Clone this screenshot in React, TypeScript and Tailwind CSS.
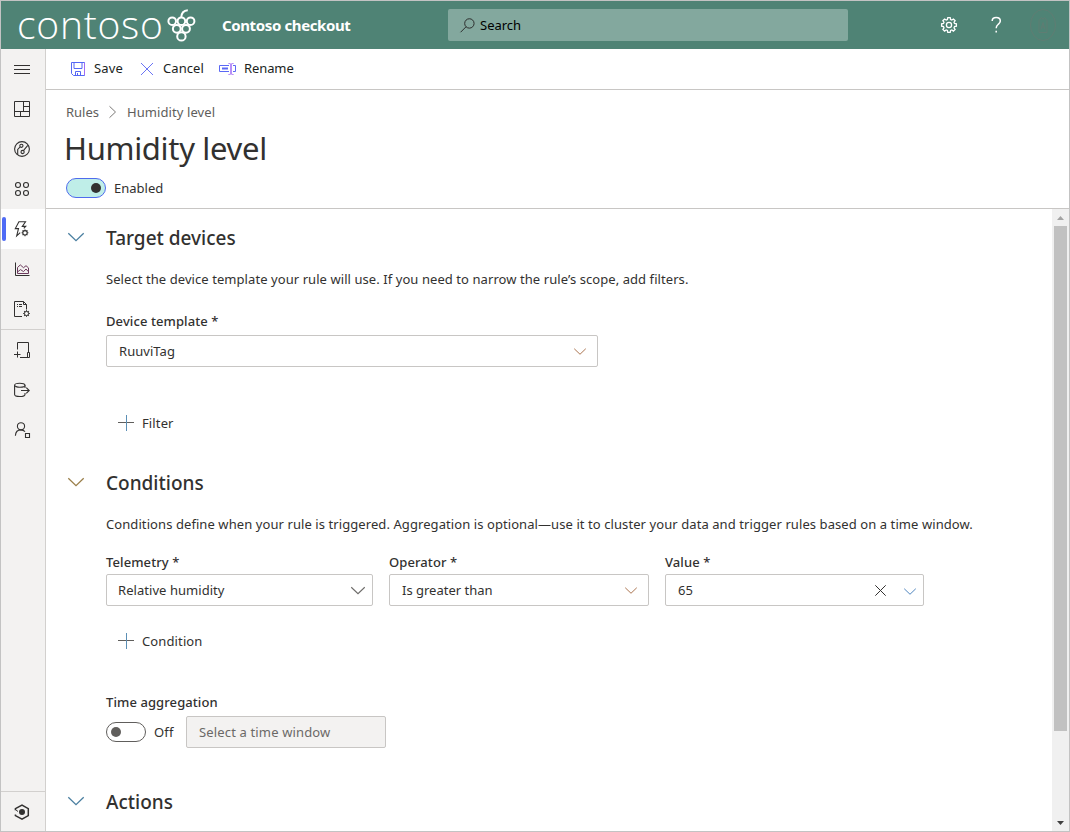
import React from "react";
import type { ReactNode } from "react";

const Glyph = ({ children, className = "size-4 text-[#323130]", box = "0 0 16 16", width = 1 }: { children: ReactNode; className?: string; box?: string; width?: number }) => (
  <svg viewBox={box} className={`shrink-0 overflow-visible ${className}`} fill="none" stroke="currentColor" strokeWidth={width}>
    {children}
  </svg>
);

const Cog = ({ x, y, r }: { x: number; y: number; r: number }) => (
  <g>
    <circle cx={x} cy={y} r={r} />
    {[0, 45, 90, 135, 180, 225, 270, 315].map((a) => (
      <path key={a} d={`M${x} ${y - r}v-1.2`} transform={`rotate(${a} ${x} ${y})`} />
    ))}
  </g>
);

function NavItem({ active = false, children }: { active?: boolean; children: ReactNode }) {
  return (
    <a className={`flex h-10 w-full shrink-0 items-center ${active ? "bg-white" : ""}`}>
      <span className={`ml-px h-6 w-1 rounded-full ${active ? "bg-[#4f6bf5]" : ""}`} />
      <span className="ml-2 flex size-4">{children}</span>
    </a>
  );
}

function Sidebar() {
  return (
    <nav className="flex w-[45px] shrink-0 flex-col border-r border-[#d2d0ce] bg-[#f3f2f1]">
      <NavItem>
        <Glyph><path d="M0 4.5h16M0 8.5h16M0 12.5h16" /></Glyph>
      </NavItem>
      <NavItem>
        <Glyph><path d="M.5 .5h15v15H.5zM9.5 .5v10M.5 10.5h15M9.5 5.5h6M6.5 10.5v5" /></Glyph>
      </NavItem>
      <NavItem>
        <Glyph width={1.1}>
          <circle cx="8" cy="8" r="7.4" />
          <circle cx="7.4" cy="4.8" r="1.6" />
          <circle cx="8.6" cy="11" r="1.6" />
          <path d="M6.2 5.9 3.7 8.4v5.4M9.4 9.6l4.4-5.2" />
        </Glyph>
      </NavItem>
      <NavItem>
        <Glyph width={1.1}>
          <circle cx="4" cy="4" r="2.5" />
          <circle cx="12" cy="4" r="2.5" />
          <circle cx="4" cy="12" r="2.5" />
          <circle cx="12" cy="12" r="2.5" />
        </Glyph>
      </NavItem>
      <NavItem active>
        <Glyph width={1.1}>
          <path d="M6 .8H4.9L1.3 7.6h3.2L2.7 14.8 6.2 11.6M5.5 .8h6L8.3 5.4h3.4L9.8 7.4" />
          <Cog x={11} y={11.8} r={2.2} />
        </Glyph>
      </NavItem>
      <NavItem>
        <Glyph>
          <path d="M1.5 1.5v13H15.5" />
          <path d="M3.5 12.5v-6l2.8-2.6 3.2 2.8 2.5-2 2.5 2.2v5.6zM3.5 11l3-2.4 3 2 2.5-2.6 2.5 2.8" stroke="#6b3a5c" />
        </Glyph>
      </NavItem>
      <NavItem>
        <Glyph>
          <path d="M8 15.5H.5V.5h9l3 3v5M9.5 .5v3h3M3 3.5h1M5 3.5h3M3 5.5h1M5 5.5h3" />
          <Cog x={12.5} y={12.5} r={2.1} />
        </Glyph>
      </NavItem>
      <div className="h-px shrink-0 bg-[#d2d0ce]" />
      <NavItem>
        <Glyph><path d="M3.5 7.5v-7h11v9.5M6 15.5h9.5v-5h-2v5M0 12.5h6.5M3.5 9.5v6" /></Glyph>
      </NavItem>
      <NavItem>
        <Glyph width={1.1}>
          <ellipse cx="5.8" cy="3.2" rx="5.2" ry="2" />
          <path d="M.6 3.2v9.3c0 1.1 2.3 2 5.2 2s5.2-.9 5.2-2v-1.6M11 3.2v2.9M7 8.5h8.2M12.3 5.6l2.9 2.9-2.9 2.9" />
        </Glyph>
      </NavItem>
      <NavItem>
        <Glyph width={1.1}>
          <circle cx="7" cy="4.3" r="3.6" />
          <path d="M1.4 13.7C1.6 10.3 3.8 7.9 7 7.9c1.6 0 3 .6 4 1.7M11.5 11.5h4v4h-4z" />
        </Glyph>
      </NavItem>
      <div className="grow" />
      <div className="h-px shrink-0 bg-[#d2d0ce]" />
      <div className="flex h-[39px] shrink-0 items-center pl-[13px]">
        <Glyph width={1.5}>
          <path d="M1.4 6.3V4.6L8 1.1l6.3 3.5v7L8 15.1l-6.6-3.5v-1" />
          <circle cx="8" cy="8.1" r="3" fill="currentColor" stroke="none" />
          <path d="M1.4 5.5 4 7.5" strokeWidth={1} />
        </Glyph>
      </div>
    </nav>
  );
}

function Grapes() {
  return (
    <Glyph className="h-[33px] w-7 text-white" box="0 0 28 33" width={2}>
      <circle cx="5.2" cy="12.2" r="3.8" />
      <circle cx="14.4" cy="12.2" r="3.8" />
      <circle cx="23.6" cy="12.2" r="3.8" />
      <circle cx="9.8" cy="19.8" r="3.9" />
      <circle cx="19" cy="19.8" r="3.9" />
      <circle cx="14.4" cy="27.4" r="4.2" />
      <path d="M14.2 8.5c.2-4.3 2.400-7 6.600-7.300" />
    </Glyph>
  );
}

function Header() {
  return (
    <header className="flex h-12 shrink-0 items-center bg-[#4f8375] text-white">
      <div className="flex w-[221px] items-center pl-4">
        <span className="w-[150px] pb-[3px] font-['Open_Sans',sans-serif] text-[39px] leading-[45px] font-light tracking-[0.75px]">contoso</span>
        <Grapes />
      </div>
      <div className="w-[226px] pb-px text-[15px] font-bold tracking-[-0.38px]">Contoso checkout</div>
      <div className="flex h-8 w-[400px] items-center gap-[5px] rounded-xs bg-[#83a89e] pl-3 text-black">
        <Glyph className="size-[15px] text-[#262626]">
          <circle cx="10" cy="5.8" r="5" />
          <path d="M6.4 9.4.6 15.2" />
        </Glyph>
        <span>Search</span>
      </div>
      <div className="ml-[93px] flex items-center">
        <Glyph className="size-4 text-white" width={1.3}>
          <path d="m6.4 2.5.4-1.9h2.4l.4 1.9 1.2.5L12.4 2l1.7 1.7-1.1 1.6.5 1.2 1.9.4v2.3l-1.9.4-.5 1.2 1.1 1.6-1.7 1.7-1.6-1.1-1.2.5-.4 1.9H6.8l-.4-1.9-1.2-.5-1.6 1.1-1.7-1.7L3 10.8l-.5-1.2-1.9-.4V6.9l1.9-.4L3 5.3 1.9 3.7 3.6 2l1.6 1z" />
          <circle cx="8" cy="8" r="2.6" />
        </Glyph>
        <Glyph className="ml-[31px] size-4 text-white" width={1.5}>
          <path d="M4.2 4C4.2 1.9 5.7.6 8.2 .6s4.1 1.4 4.1 3.4c0 1.8-1.2 2.5-2.3 3.5C8.8 8.5 8.2 9.2 8.2 11.3M8.2 13.8v1.7" />
        </Glyph>
        <Glyph className="ml-[26px] h-8 w-[26px] text-[#5f7d73]" box="0 0 26 32">
          <ellipse cx="13" cy="16" rx="12.5" ry="15.5" />
          <path d="M9 23.5v-12l2.5-3 1.5 2 1.5-2 2.5 3v12zM11 20.5l2-7 2 7M11.5 18h3" />
        </Glyph>
      </div>
    </header>
  );
}

function CommandBar() {
  return (
    <div className="flex h-[41px] shrink-0 items-center border-b border-[#c8c6c4] pb-0.5 pl-[25px] text-[#201f1e]">
      <Glyph className="mt-px size-[14px] text-[#5567f5]" box="0 0 14 14">
        <path d="M.5 .5h13v13H2.5l-2-2zM3 .5v6h8v-6M4.5 13.5V9.5h5v4M6.5 11v2.5" />
        <path d="M13.5 1v12" stroke="#a06bf5" />
      </Glyph>
      <span className="ml-[9px] w-[47px] tracking-[0.15px]">Save</span>
      <Glyph className="mt-px size-3 text-[#6a74f5]" box="0 0 12 12"><path d="M0 0l12 12M12 0 0 12" /></Glyph>
      <span className="ml-[10px] w-[56px] tracking-[0.06px]">Cancel</span>
      <Glyph className="mt-px h-3 w-[17px] text-[#5b68f5]" box="0 0 17 12">
        <path d="M10 2.5H.5v6H10M14 2.5h2.5v6H14" />
        <path d="M3 5.5h6" strokeWidth={2} />
        <path d="M9.5 .5c1.5 0 2.5.3 2.5 1v9c0 .7-1 1-2.5 1M14.5 .5c-1.5 0-2.5.3-2.5 1v9c0 .7 1 1 2.5 1" stroke="#a06bf5" />
      </Glyph>
      <span className="ml-2 tracking-[-0.1px]">Rename</span>
    </div>
  );
}

const Chevron = ({ className }: { className: string }) => (
  <Glyph className={className} box="0 0 16 8" width={1.3}><path d="M.3 .3 8 7.7 15.7 .3" /></Glyph>
);

const SectionTitle = ({ color, children }: { color: string; children: ReactNode }) => (
  <div className="flex h-[30px] items-center">
    <Chevron className={`mr-[22px] mb-0.5 h-2 w-4 ${color}`} />
    <h2 className="text-[19px] font-medium">{children}</h2>
  </div>
);

const Label = ({ children }: { children: ReactNode }) => (
  <div className="h-5 leading-5 font-medium tracking-[0.09px]">{children}</div>
);

const Field = ({ className, children }: { className: string; children: ReactNode }) => (
  <div className={`flex h-8 items-center justify-between rounded-xs border border-[#c8c6c4] ${className}`}>{children}</div>
);

const AddButton = ({ children }: { children: ReactNode }) => (
  <button className="ml-3 flex h-5 items-center gap-2 tracking-[0.12px]">
    <Glyph className="size-4 text-[#605e5c]"><path d="M0 7.5h16" /><path d="M8.5 0v16" stroke="#5b8fb5" /></Glyph>
    {children}
  </button>
);

function ScrollBar() {
  return (
    <div className="flex w-[17px] shrink-0 flex-col items-center bg-[#f0f0f0]">
      <div className="flex h-[17px] items-center"><svg className="h-1 w-[7px]" viewBox="0 0 7 4"><path d="M0 4 3.5 0 7 4z" fill="#a3a3a3" /></svg></div>
      <div className="h-[505px] w-[13px] bg-[#c1c1c1]" />
      <div className="grow" />
      <div className="flex h-[17px] items-center"><svg className="h-1 w-[7px]" viewBox="0 0 7 4"><path d="M0 0h7L3.5 4z" fill="#404040" /></svg></div>
    </div>
  );
}

export default function App() {
  return (
    <div className="flex h-[832px] w-[1070px] flex-col overflow-hidden border border-[#c3c3c3] bg-white font-['Noto_Sans','Open_Sans',sans-serif] text-[13px] leading-5 whitespace-nowrap text-[#323130]">
      <Header />
      <div className="flex min-h-0 grow">
        <Sidebar />
        <main className="flex min-w-0 grow flex-col">
          <CommandBar />
          <div className="flex h-[119px] shrink-0 flex-col border-b border-[#c8c6c4] pt-3 pl-5">
            <div className="flex h-5 items-center text-[#605e5c]">
              <span className="w-[43px]">Rules</span>
              <Glyph className="h-3 w-[7px] text-[#7a7876]" box="0 0 7 12"><path d="M.5 .3 6.5 6 .5 11.7" /></Glyph>
              <span className="ml-[11px] tracking-[0.08px]">Humidity level</span>
            </div>
            <h1 className="-ml-[2px] h-[54px] text-[31px] leading-[52px] font-normal tracking-[-0.32px]">Humidity level</h1>
            <div className="mt-[2px] flex h-5 items-center gap-2">
              <div className="flex h-5 w-10 items-center justify-end rounded-full border border-[#4f6bed] bg-[#bfeee8] pr-1">
                <span className="size-2.5 rounded-full bg-[#323130]" />
              </div>
              <span>Enabled</span>
            </div>
          </div>
          <div className="flex min-h-0 grow">
            <div className="min-w-0 grow overflow-hidden pt-[14px] pl-[22px]">
              <SectionTitle color="text-[#4a7fa0]">Target devices</SectionTitle>
              <div className="pl-[38px]">
                <p className="mt-4 tracking-[0.07px]">Select the device template your rule will use. If you need to narrow the rule’s scope, add filters.</p>
                <div className="mt-[22px] mb-1"><Label>Device template *</Label></div>
                <Field className="w-[492px] pr-[11px] pl-3"><span className="tracking-[0.05px]">RuuviTag</span><Chevron className="h-[7px] w-3 text-[#a9714c]" /></Field>
                <div className="mt-[46px]"><AddButton>Filter</AddButton></div>
              </div>
              <div className="mt-[35px]"><SectionTitle color="text-[#9a7f4a]">Conditions</SectionTitle></div>
              <div className="pl-[38px]">
                <p className="mt-4 tracking-[0.08px]">Conditions define when your rule is triggered. Aggregation is optional—use it to cluster your data and trigger rules based on a time window.</p>
                <div className="mt-[18px] flex gap-4">
                  <div className="flex flex-col gap-0.5">
                    <Label>Telemetry *</Label>
                    <Field className="w-[267px] pr-[7px] pl-[11px]"><span className="tracking-[0.05px]">Relative humidity</span><Chevron className="h-[7px] w-[14px] text-[#6e6c6a]" /></Field>
                  </div>
                  <div className="flex flex-col gap-0.5">
                    <Label>Operator *</Label>
                    <Field className="w-[260px] pr-[11px] pl-3"><span>Is greater than</span><Chevron className="h-[7px] w-3 text-[#a9714c]" /></Field>
                  </div>
                  <div className="flex flex-col gap-0.5">
                    <Label>Value *</Label>
                    <Field className="w-[259px] pr-[7px] pl-3">
                      <span className="grow">65</span>
                      <Glyph className="mr-[18px] size-[11px] text-[#323130]" box="0 0 11 11"><path d="M.3 .3l10.4 10.4M10.7 .3.3 10.7" /></Glyph>
                      <Chevron className="mt-[3px] h-[7px] w-3 text-[#4b83bd]" />
                    </Field>
                  </div>
                </div>
                <div className="mt-[25px]"><AddButton>Condition</AddButton></div>
                <div className="mt-[41px] mb-1"><Label>Time aggregation</Label></div>
                <div className="flex items-center">
                  <div className="flex h-5 w-10 items-center rounded-full border border-[#605e5c] pl-1">
                    <span className="size-2.5 rounded-full bg-[#605e5c]" />
                  </div>
                  <span className="ml-2 w-8 tracking-[0.2px]">Off</span>
                  <Field className="w-[200px] bg-[#f3f2f1] pl-3 text-[#6b6967]"><span className="tracking-[0.15px]">Select a time window</span></Field>
                </div>
              </div>
              <div className="mt-[39px]"><SectionTitle color="text-[#4a7fa0]">Actions</SectionTitle></div>
            </div>
            <ScrollBar />
          </div>
        </main>
      </div>
    </div>
  );
}
